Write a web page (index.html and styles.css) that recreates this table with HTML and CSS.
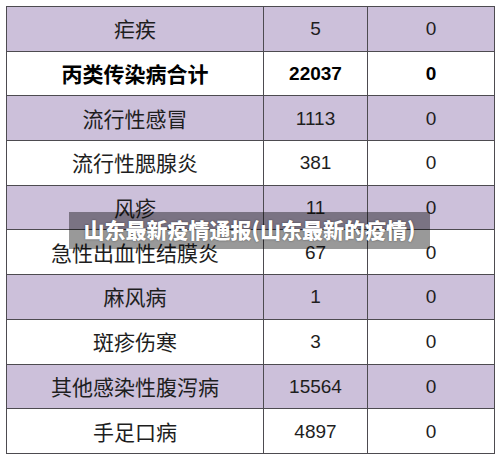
FILE: index.html
```html
<!DOCTYPE html>
<html lang="zh-CN">
<head>
<meta charset="utf-8">
<title>山东最新疫情通报</title>
<link rel="stylesheet" href="styles.css">
</head>
<body>
<div class="page">
  <div class="table">
    <div class="cell name alt">疟疾</div><div class="cell num alt">5</div><div class="cell num alt">0</div>
    <div class="cell name bold">丙类传染病合计</div><div class="cell num bold">22037</div><div class="cell num bold">0</div>
    <div class="cell name alt">流行性感冒</div><div class="cell num alt">1113</div><div class="cell num alt">0</div>
    <div class="cell name">流行性腮腺炎</div><div class="cell num">381</div><div class="cell num">0</div>
    <div class="cell name alt">风疹</div><div class="cell num alt">11</div><div class="cell num alt">0</div>
    <div class="cell name">急性出血性结膜炎</div><div class="cell num">67</div><div class="cell num">0</div>
    <div class="cell name alt">麻风病</div><div class="cell num alt">1</div><div class="cell num alt">0</div>
    <div class="cell name">斑疹伤寒</div><div class="cell num">3</div><div class="cell num">0</div>
    <div class="cell name alt">其他感染性腹泻病</div><div class="cell num alt">15564</div><div class="cell num alt">0</div>
    <div class="cell name">手足口病</div><div class="cell num">4897</div><div class="cell num">0</div>
  </div>
  <div class="caption">山东最新疫情通报(山东最新的疫情)</div>
</div>
</body>
</html>
```

FILE: styles.css
```css
html, body {
  margin: 0;
  padding: 0;
  background: #ffffff;
}

.page {
  position: relative;
  width: 500px;
  height: 462px;
  padding: 6px 0 0 6px;
  box-sizing: border-box;
}

.table {
  display: grid;
  grid-template-columns: 257px 104px 127px;
  grid-auto-rows: 44.7px;
  width: max-content;
  border-top: 1px solid #4d4b50;
  border-left: 1px solid #4d4b50;
  font-family: "Liberation Sans", "Noto Sans CJK SC", sans-serif;
  color: #1e1e1e;
}

.cell {
  display: flex;
  align-items: center;
  justify-content: center;
  border-right: 1px solid #4d4b50;
  border-bottom: 1px solid #4d4b50;
  background: #ffffff;
  line-height: 1;
}

.cell.alt {
  background: #ccc0da;
}

.name {
  font-family: "Noto Sans CJK SC", sans-serif;
  font-size: 21px;
}

.num {
  font-size: 19px;
}

.bold {
  font-weight: 700;
  color: #000000;
}

.caption {
  position: absolute;
  left: 69px;
  top: 212px;
  width: 361px;
  height: 37px;
  background: rgba(0, 0, 0, 0.4);
  color: #ffffff;
  font-family: "Noto Sans CJK SC", sans-serif;
  font-weight: 900;
  font-size: 21px;
  line-height: 35px;
  text-align: center;
  text-shadow: 0 0 2px rgba(0, 0, 0, 0.5);
}
```
